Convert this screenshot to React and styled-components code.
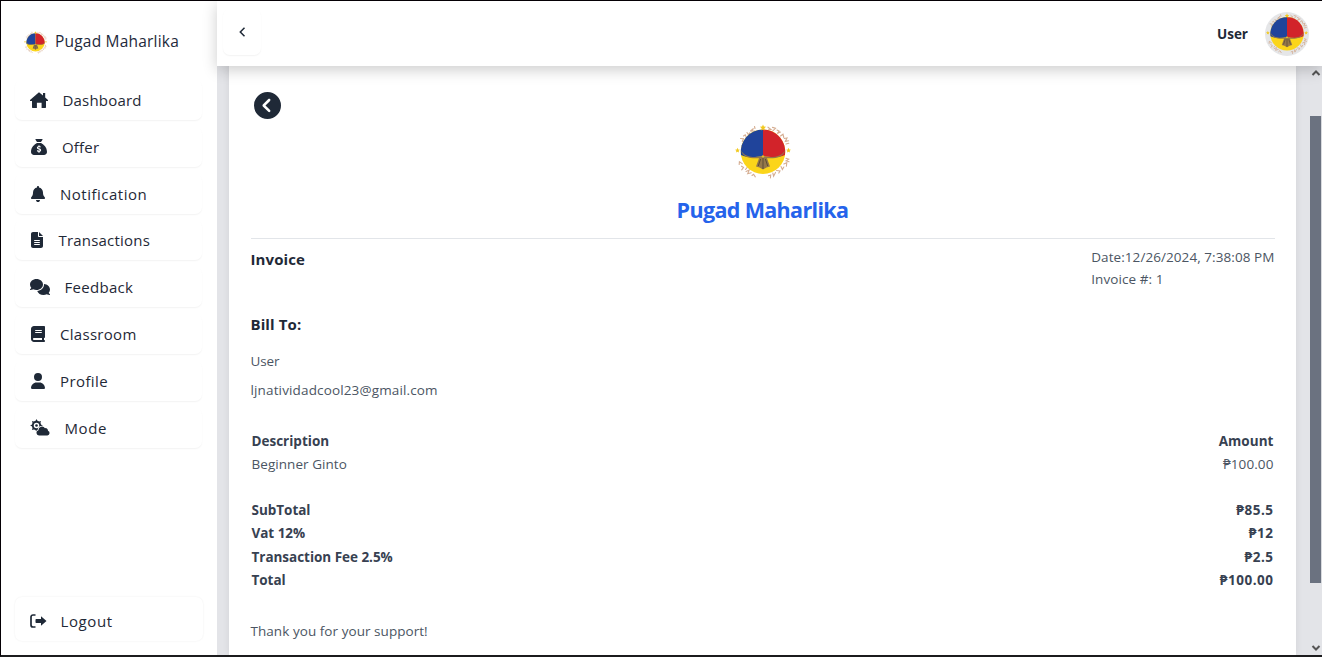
import React from 'react';
import styled, { createGlobalStyle, css } from 'styled-components';
import {
  FaSackDollar, FaBell, FaFileLines, FaComments, FaBook, FaUser, FaCircleChevronLeft,
} from 'react-icons/fa6';

const GlobalStyle = createGlobalStyle`
  *, *::before, *::after { box-sizing: border-box; }
  body {
    margin: 0;
    overflow: hidden;
    background: #fff;
    color: #1f2937;
    font-family: "Open Sans", "Noto Sans", sans-serif;
  }
  h1, h2, p { margin: 0; }
  svg { display: block; flex: none; }
`;

const Window = styled.div`
  display: flex;
  width: 1322px;
  height: 657px;
  border-top: 1px solid #050005;
  border-left: 1px solid #050005;
  border-bottom: 2px solid #1c1c1e;
  background: #fff;
`;

const Sidebar = styled.aside`
  display: flex;
  flex-direction: column;
  flex: none;
  width: 216px;
  padding: 20px 14px 14px;
`;

const Brand = styled.div`
  display: flex;
  align-items: center;
  height: 42px;
  padding-left: 9px;
  gap: 8px;
  font-size: 15.5px;
  line-height: 20px;
  letter-spacing: 0.2px;
  color: #1e293b;
`;

const BrandName = styled.span`
  padding-bottom: 2px;
`;

const Nav = styled.nav`
  display: flex;
  flex-direction: column;
  gap: 6.8px;
  margin-top: 17px;
`;

const cardShadow = css`
  border-radius: 7px;
  box-shadow: 0 1px 1.5px rgba(0, 0, 0, 0.05);
`;

const NavItem = styled.a`
  ${cardShadow}
  display: flex;
  align-items: center;
  height: 40px;
  width: 187px;
  padding-left: ${(p) => p.$inset ?? 15}px;
  gap: ${(p) => p.$gap ?? 15}px;
  font-size: 15px;
  letter-spacing: ${(p) => p.$spacing ?? 0.2}px;
  color: #1f2937;
`;

const LogoutItem = styled(NavItem)`
  height: 44px;
  width: 188px;
  margin-top: auto;
  padding-top: 3px;
  box-shadow: 0 0 2px rgba(0, 0, 0, 0.08);
`;

const Content = styled.div`
  display: flex;
  flex-direction: column;
  flex: 1;
  min-width: 0;
`;

const Topbar = styled.header`
  position: relative;
  z-index: 1;
  display: flex;
  align-items: center;
  justify-content: space-between;
  flex: none;
  height: 65px;
  padding: 0 13px 0 6px;
  background: #fff;
  box-shadow: 0 4px 14px rgba(0, 0, 0, 0.2);
`;

const CollapseButton = styled.button`
  ${cardShadow}
  display: flex;
  align-items: center;
  justify-content: center;
  width: 38px;
  height: 46px;
  margin-top: -4px;
  padding: 0;
  border: 0;
  background: #fff;
  color: #1f2937;
`;

const Account = styled.div`
  display: flex;
  align-items: center;
  gap: 17px;
  font-size: 13.5px;
  font-weight: 700;
`;

const Avatar = styled.span`
  display: grid;
  place-items: center;
  width: 44px;
  height: 44px;
  border-radius: 50%;
  background: #e5e6e8;
`;

const Scroller = styled.main`
  display: flex;
  flex: 1;
  min-height: 0;
  padding-left: 12px;
  background: #e3e4e8;
`;

const Sheet = styled.section`
  width: 1067px;
  flex: none;
  padding: 26px 21.5px 0 21.5px;
  background: #fff;
  box-shadow: 0 0 7px rgba(0, 0, 0, 0.08);
`;

const BackButton = styled.div`
  width: 27px;
  height: 27px;
  margin-left: 3.5px;
`;

const Masthead = styled.div`
  display: flex;
  flex-direction: column;
  align-items: center;
  height: 120px;
  padding-top: 5px;
  border-bottom: 1px solid #e2e5e9;
`;

const Title = styled.h1`
  margin-top: 15px;
  font-size: 21.5px;
  line-height: 30px;
  letter-spacing: -0.65px;
  color: #2563eb;
`;

const InvoiceHead = styled.div`
  display: flex;
  justify-content: space-between;
  height: 74px;
  padding-top: 7px;
`;

const Heading = styled.h2`
  padding-top: ${(p) => p.$drop ?? 0}px;
  font-size: 15px;
  line-height: 22px;
  letter-spacing: ${(p) => p.$spacing ?? 0}px;
  color: #1f2937;
`;

const Line = styled.p`
  font-size: 13.5px;
  line-height: ${(p) => p.$leading ?? 22}px;
  letter-spacing: ${(p) => p.$spacing ?? 0.07}px;
  color: #4b5563;
`;

const BillTo = styled.div`
  display: flex;
  flex-direction: column;
  height: 117px;
`;

const BillLines = styled.div`
  margin-top: 12px;
`;

const Group = styled.div`
  margin-bottom: ${(p) => p.$after}px;
`;

const Entry = styled.div`
  display: flex;
  justify-content: space-between;
  height: 23.4px;
  padding: 0 1px;
  font-size: 13.5px;
  line-height: 23px;
  font-weight: ${(p) => (p.$bold ? 700 : 400)};
  color: ${(p) => (p.$bold ? '#374151' : '#4b5563')};
`;

const Label = styled.span`
  letter-spacing: ${(p) => p.$spacing ?? 0}px;
`;

const Scrollbar = styled.div`
  display: flex;
  flex-direction: column;
  align-items: center;
  width: 12px;
  margin-left: auto;
  padding-top: 4px;
`;

const Thumb = styled.div`
  width: 12px;
  height: 467px;
  margin: 40px 0 auto;
  border-right: 1px solid #d8dade;
  background: #6b7280;
`;

const ArrowSlot = styled.div`
  padding-bottom: 4px;
`;

const STAR = 'M0-3.1L.9-1 3.1-.8 1.4.7 1.9 2.9 0 1.7-1.9 2.9-1.4.7-3.1-.8-.9-1Z';

function Logo({ size }) {
  return (
    <svg width={size} height={size} viewBox="0 0 56 56">
      <g fill="none" stroke="#d5ad91" strokeWidth="1.1" strokeLinecap="round">
        <path d="M5.5 14.5l3 .3-1.2 2.7M8.5 12l1.800-1.200 1 2.600M12 8.500l1.600 2.400 1.200-2M15.500 7l3-2.500-2 2.700 3-.2M20 4.500l-.5-2" />
        <path d="M33 3.200l3 2.400-2.500.1M37.500 3.400l3 .9-2.700 2.600M42 6l2.200 1.200-2 2.300 3.300-1.400M45.500 12l2.500-1.800.8 3.300M49.200 14.500l2.800-.6-1.700 3.500 3.300-.6M51 20l2.800-.7" />
        <path d="M51 34.300l2.700.9-2.600 1.600 2.900 1M48.800 40l3-1.300-.4 3.500M46 42.500l1.400 3 1.400-2.500M41.500 46.500l3.500.4-1.200 2.200M37.800 49l.8 3.200 1.900-3.800M33.500 51.800l2.200-.8-.3 3" />
        <path d="M4.200 40.500l.2-2.700 2.800 1.800M6.500 42.200l2 1.300-1.800 2.300M10.500 45.500l1.500-1.800M11 47.400l3.200-1.300-1.500 3.600 3.500-1M17 51.500l1.600-1.300 1.700 2.700" />
      </g>
      <circle cx="28" cy="27.700" r="22.300" fill="#fbd51a" />
      <path d="M28 5.400A22.300 22.300 0 0 0 6 31C12 34 21 33.500 28 32Z" fill="#20449b" />
      <path d="M28 5.400A22.300 22.300 0 0 1 50 31C44 34 35 33.500 28 32Z" fill="#d2232a" />
      <path d="M6.200 26C9 33.500 19 33.400 25.500 32.600L28 31l2.500 1.600C37 33.400 47 33.500 49.800 26 49 34 39 34.800 32 34.200L35 42.500 31.500 43.500 28 45.500l-3.500-2-3.500-1 3-8.300C17 34.800 7 34 6.200 26Z" fill="#94784a" />
      <path d="M25.600 35l-2.300 7M28 34v11M30.400 35l2.300 7" stroke="#5c4d36" strokeWidth="1" fill="none" />
      <path d="M26.300 32.400l1.700-1.200 1.700 1.200-1.200 1.200h-1z" fill="#e8bd2b" />
      <g fill="#f1c91e">
        <path d={STAR} transform="translate(28 3.500)" />
        <path d={STAR} transform="translate(2.500 26.300) scale(.8)" />
        <path d={STAR} transform="translate(53.500 26.300) scale(.8)" />
      </g>
    </svg>
  );
}

function HomeIcon() {
  return (
    <svg width="18" height="16" viewBox="0 0 18 16" fill="currentColor">
      <path d="M9 .2L13 3.600V1h2.200v4.600L18 8.100v.9h-2v6c0 .7-.3 1-1 1h-3.400v-5.200H6.900V16H3c-.7 0-1-.3-1-1V9H0v-.9Z" />
    </svg>
  );
}

const GEAR_TEETH = [0, 45, 90, 135, 180, 225, 270, 315];

function ModeIcon() {
  return (
    <svg width="20" height="17" viewBox="0 0 20 17" fill="currentColor">
      <circle cx="6.500" cy="6.500" r="3.700" fill="none" stroke="currentColor" strokeWidth="1.900" />
      <circle cx="6.500" cy="6.500" r="1.300" />
      {GEAR_TEETH.map((angle) => (
        <path key={angle} d="M5.200 2.600L6.500.1 7.800 2.600Z" transform={`rotate(${angle} 6.500 6.500)`} />
      ))}
      <path
        d="M9 16.500a2.700 2.700 0 0 1-.6-5.300A3.600 3.600 0 0 1 15 9.200a2.400 2.400 0 0 1 3 2.500 2.500 2.500 0 0 1-.6 4.800Z"
        stroke="#fff"
        strokeWidth="1.600"
        paintOrder="stroke"
      />
    </svg>
  );
}

function LogoutIcon() {
  return (
    <svg width="17" height="14" viewBox="0 0 17 14">
      <path d="M5.500 1H3a2 2 0 0 0-2 2v8a2 2 0 0 0 2 2h2.500" fill="none" stroke="currentColor" strokeWidth="1.700" />
      <path d="M11 2.200L16.500 7 11 11.800V9H6.200a.7.700 0 0 1-.7-.7V5.700c0-.4.300-.7.700-.7H11Z" fill="currentColor" />
    </svg>
  );
}

function Chevron({ width, height, d, stroke = 1.5, color = 'currentColor' }) {
  return (
    <svg width={width} height={height} fill="none" stroke={color} strokeWidth={stroke}>
      <path d={d} />
    </svg>
  );
}

const NAV = [
  { label: 'Dashboard', icon: <HomeIcon />, gap: 14.5 },
  { label: 'Offer', icon: <FaSackDollar size={16} />, inset: 16 },
  { label: 'Notification', icon: <FaBell size={16} />, inset: 15, gap: 14, spacing: 0.5 },
  { label: 'Transactions', icon: <FaFileLines size={16} />, inset: 14, gap: 13.5 },
  { label: 'Feedback', icon: <FaComments size={20} />, gap: 14.5, spacing: 0.3 },
  { label: 'Classroom', icon: <FaBook size={16} />, inset: 15, gap: 14, spacing: 0.3 },
  { label: 'Profile', icon: <FaUser size={16} />, inset: 15, gap: 14, spacing: 0.4 },
  { label: 'Mode', icon: <ModeIcon />, gap: 14.5, spacing: 0.6 },
];

const TOTALS = [
  ['SubTotal', '₱85.5'],
  ['Vat 12%', '₱12'],
  ['Transaction Fee 2.5%', '₱2.5'],
  ['Total', '₱100.00'],
];

export default function App() {
  return (
    <>
      <GlobalStyle />
      <Window>
        <Sidebar>
          <Brand><Logo size={23} /><BrandName>Pugad Maharlika</BrandName></Brand>
          <Nav>
            {NAV.map((n) => (
              <NavItem key={n.label} $inset={n.inset} $gap={n.gap} $spacing={n.spacing}>{n.icon}{n.label}</NavItem>
            ))}
          </Nav>
          <LogoutItem $gap={13.5} $spacing={0.6}><LogoutIcon />Logout</LogoutItem>
        </Sidebar>
        <Content>
          <Topbar>
            <CollapseButton><Chevron width={8} height={10} d="M6.500 .8L2.300 5l4.200 4.200" /></CollapseButton>
            <Account>User<Avatar><Logo size={42} /></Avatar></Account>
          </Topbar>
          <Scroller>
            <Sheet>
              <BackButton><FaCircleChevronLeft size={27} /></BackButton>
              <Masthead>
                <Logo size={56} />
                <Title>Pugad Maharlika</Title>
              </Masthead>
              <InvoiceHead>
                <Heading $drop={2} $spacing={0.1}>Invoice</Heading>
                <div>
                  <Line>Date:12/26/2024, 7:38:08 PM</Line>
                  <Line>Invoice #: 1</Line>
                </div>
              </InvoiceHead>
              <BillTo>
                <Heading $spacing={0.1}>Bill To:</Heading>
                <BillLines>
                  <Line $leading={29} $spacing={-0.1}>User</Line>
                  <Line $leading={29} $spacing={0.14}>ljnatividadcool23@gmail.com</Line>
                </BillLines>
              </BillTo>
              <Group $after={22}>
                <Entry $bold><Label>Description</Label><Label $spacing={0.05}>Amount</Label></Entry>
                <Entry><Label $spacing={0.05}>Beginner Ginto</Label><Label $spacing={0.1}>₱100.00</Label></Entry>
              </Group>
              <Group $after={28}>
                {TOTALS.map(([label, amount]) => (
                  <Entry key={label} $bold><Label $spacing={-0.03}>{label}</Label><Label $spacing={0.5}>{amount}</Label></Entry>
                ))}
              </Group>
              <Line $leading={22} $spacing={0.05}>Thank you for your support!</Line>
            </Sheet>
            <Scrollbar>
              <Chevron width={10} height={6} d="M1.500 5L5 1.500 8.500 5" stroke={2} color="#555" />
              <Thumb />
              <ArrowSlot><Chevron width={10} height={6} d="M1.500 1L5 4.500 8.500 1" stroke={2} color="#555" /></ArrowSlot>
            </Scrollbar>
          </Scroller>
        </Content>
      </Window>
    </>
  );
}
